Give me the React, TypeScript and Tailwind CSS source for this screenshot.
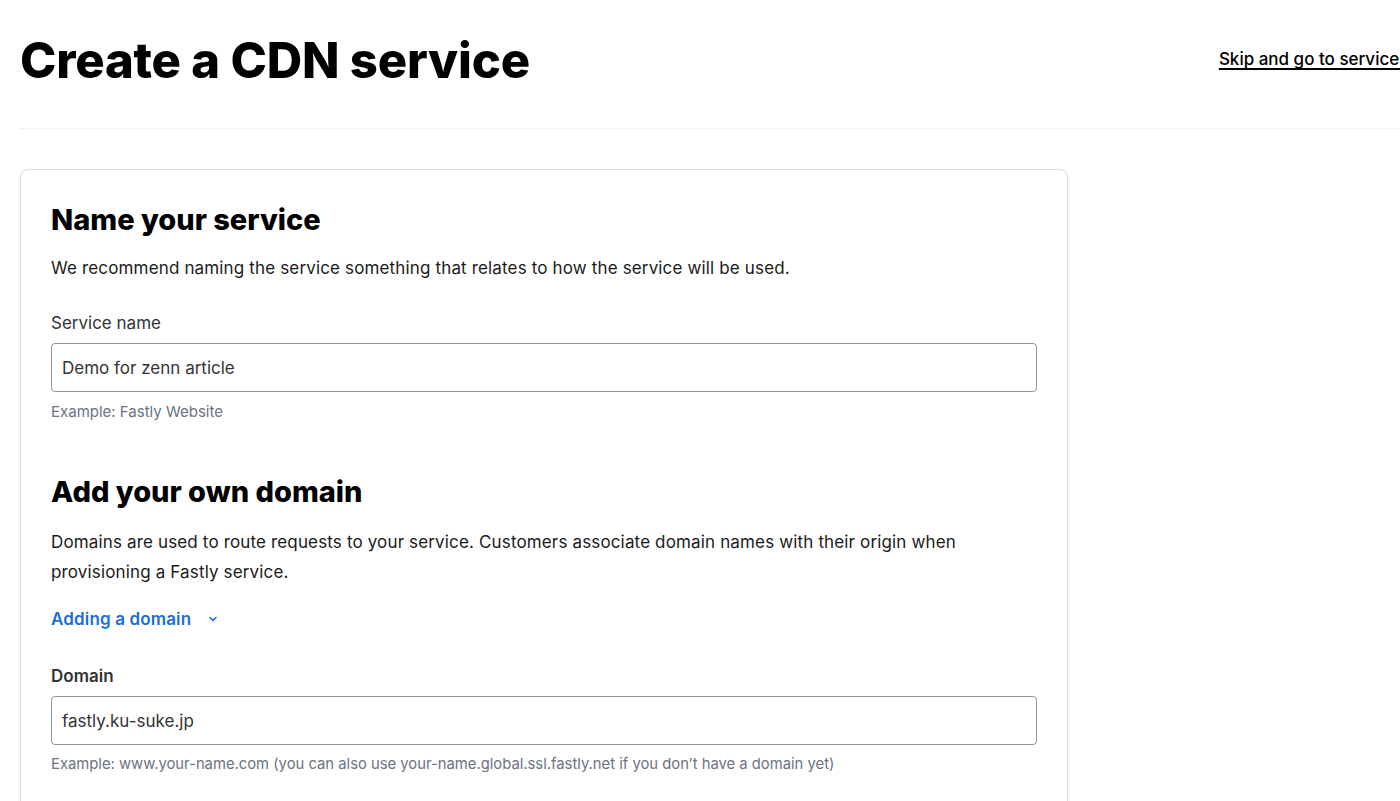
import React from "react";

export default function App() {
  return (
    <div className="w-[1400px] h-[801px] overflow-hidden bg-white text-[#1a1a1a]" style={{ fontFamily: "Inter, 'Noto Sans', sans-serif" }}>
      <div className="w-[1460px] pl-[20px]">
        <div className="flex items-center h-[120px]">
          <h1 className="text-[49px] font-extrabold tracking-[-0.2px] text-black leading-none">Create a CDN service</h1>
          <a className="ml-[689px] text-[17px] font-medium text-black underline underline-offset-[3px] decoration-[1.5px] whitespace-nowrap">Skip and go to services</a>
        </div>
        <div className="h-px bg-[#f0f0f0] mt-[8px]" />
        <div className="mt-[40px] w-[1048px] rounded-[8px] border border-[#dcdcdc] px-[30px] pt-[32px] pb-[40px]">
          <h2 className="text-[29px] font-extrabold text-black leading-[36px]">Name your service</h2>
          <p className="mt-[16px] text-[17px] tracking-[0.15px] leading-[28px]">We recommend naming the service something that relates to how the service will be used.</p>
          <label className="block mt-[31px] text-[17px] text-[#333] leading-[20px]">Service name</label>
          <div className="mt-[10px] h-[49px] rounded-[4px] border border-[#8f959e] flex items-center px-[10px] pt-[2px] text-[17px] text-[#333]">Demo for zenn article</div>
          <p className="mt-[10px] text-[15px] text-[#6b7280] leading-[20px]">Example: Fastly Website</p>
          <h2 className="mt-[52px] text-[29px] font-extrabold text-black leading-[36px]">Add your own domain</h2>
          <p className="mt-[17px] text-[17px] tracking-[0.15px] leading-[30px] w-[960px]">Domains are used to route requests to your service. Customers associate domain names with their origin when provisioning a Fastly service.</p>
          <div className="mt-[20px] flex items-center gap-[16px] text-[17px] font-semibold tracking-[0.15px] text-[#1b6ed6] leading-[24px]">
            <span>Adding a domain</span>
            <svg width="12" height="12" viewBox="0 0 12 12" fill="none" stroke="currentColor" strokeWidth="1.6" strokeLinecap="round" strokeLinejoin="round"><path d="M3 4.5 L6 7.5 L9 4.5" /></svg>
          </div>
          <label className="block mt-[35px] text-[17px] font-semibold text-[#333] leading-[20px]">Domain</label>
          <div className="mt-[10px] h-[49px] rounded-[4px] border border-[#8f959e] flex items-center px-[10px] pt-[2px] text-[17px] text-[#333]">fastly.ku-suke.jp</div>
          <p className="mt-[9px] text-[14.8px] text-[#6b7280] leading-[20px]">Example: www.your-name.com (you can also use your-name.global.ssl.fastly.net if you don’t have a domain yet)</p>
        </div>
      </div>
    </div>
  );
}
